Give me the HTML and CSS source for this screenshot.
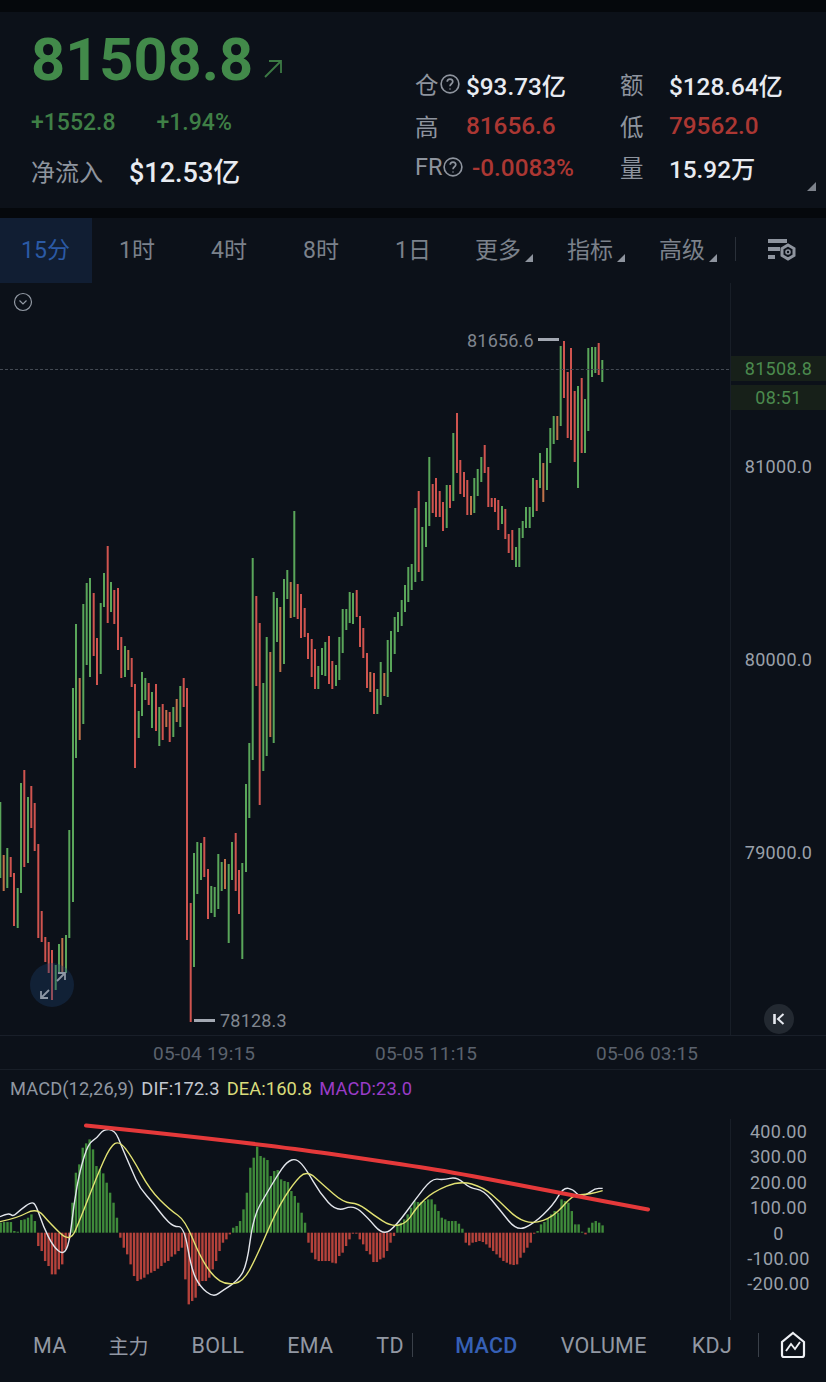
FILE: index.html
```html
<!DOCTYPE html>
<html lang="en">

<head>
     <meta charset="UTF-8">
     <meta name="viewport" content="width=device-width, initial-scale=1.0">
     <title>BTC 15分</title>
     <link rel="stylesheet" href="styles.css">
</head>

<body>
     <header class="ticker">
          <div class="ticker-left">
               <div class="price">81508.8<svg class="price-arrow" viewBox="0 0 18 18">
                         <path d="M1 17L17 1M5 1H17V13" />
                    </svg></div>
               <div class="change"><span>+1552.8</span><span>+1.94%</span></div>
               <div class="inflow"><span class="label">净流入</span><span class="value">$12.53亿</span></div>
          </div>
          <div class="stats">
               <span class="label">仓<svg class="help" viewBox="0 0 18 18">
                         <circle cx="9" cy="9" r="8" />
                         <path d="M6.5 7C6.5 3.8 11.5 3.8 11.5 7C11.5 8.8 9 8.8 9 11M9 13V14" />
                    </svg></span>
               <span class="value">$93.73亿</span>
               <span class="label">额</span>
               <span class="value">$128.64亿</span>
               <span class="label">高</span>
               <span class="value red">81656.6</span>
               <span class="label">低</span>
               <span class="value red">79562.0</span>
               <span class="label label-fr">FR<svg class="help" viewBox="0 0 18 18">
                         <circle cx="9" cy="9" r="8" />
                         <path d="M6.5 7C6.5 3.8 11.5 3.8 11.5 7C11.5 8.8 9 8.8 9 11M9 13V14" />
                    </svg></span>
               <span class="value red value-fr">-0.0083%</span>
               <span class="label">量</span>
               <span class="value">15.92万</span>
          </div>
          <i class="corner"></i>
     </header>

     <nav class="periods">
          <a class="period active">15分</a>
          <a class="period">1时</a>
          <a class="period">4时</a>
          <a class="period">8时</a>
          <a class="period">1日</a>
          <a class="period more">更多</a>
          <a class="period more">指标</a>
          <a class="period more">高级</a>
          <span class="periods-divider"></span>
          <svg class="settings" viewBox="0 0 30 24">
               <path class="settings-bars" d="M1 3H20M1 11H13M1 19H8" />
               <path class="settings-nut" d="M21 7L27 10.5V17.5L21 21L15 17.5V10.5Z" />
               <circle class="settings-hole" cx="21" cy="14" r="2" />
          </svg>
     </nav>

     <section class="chart">
          <svg class="collapse" viewBox="0 0 20 20">
               <circle cx="10" cy="10" r="8.5" />
               <path d="M6.5 8.5L10 12L13.5 8.5" />
          </svg>
          <svg id="candles" class="chart-canvas" viewBox="0 283 826 752"></svg>
          <div class="last-line"></div>
          <div class="price-axis">
               <div class="axis-tag tag-price">81508.8</div>
               <div class="axis-tag tag-time">08:51</div>
               <div class="axis-label label-81000">81000.0</div>
               <div class="axis-label label-80000">80000.0</div>
               <div class="axis-label label-79000">79000.0</div>
          </div>
          <div class="extreme extreme-high">81656.6<i></i></div>
          <div class="extreme extreme-low"><i></i>78128.3</div>
          <div class="zoom-btn">
               <svg viewBox="0 0 44 44">
                    <path d="M19 27L11 35M11 28V35H18M27 18L35 10M28 10H35V17" />
               </svg>
          </div>
          <div class="back-btn">
               <svg viewBox="0 0 14 14">
                    <path class="back-bar" d="M2.5 2V12" />
                    <path class="back-arrow" d="M11.5 2L6 7L11.5 12" />
               </svg>
          </div>
     </section>

     <div class="time-axis">
          <span>05-04 19:15</span>
          <span>05-05 11:15</span>
          <span>05-06 03:15</span>
     </div>

     <section class="macd">
          <div class="macd-legend">
               <span class="grey">MACD(12,26,9)</span>
               <span class="dif">DIF:172.3</span>
               <span class="dea">DEA:160.8</span>
               <span class="hist">MACD:23.0</span>
          </div>
          <svg id="macd-chart" class="chart-canvas" viewBox="0 1070 826 250"></svg>
          <div class="macd-axis">
               <span>400.00</span>
               <span>300.00</span>
               <span>200.00</span>
               <span>100.00</span>
               <span>0</span>
               <span>-100.00</span>
               <span>-200.00</span>
          </div>
     </section>

     <nav class="indicators">
          <a>MA</a>
          <a class="zh">主力</a>
          <a>BOLL</a>
          <a>EMA</a>
          <a class="tight">TD</a>
          <span class="indicators-divider"></span>
          <a class="active">MACD</a>
          <a>VOLUME</a>
          <a class="tight-wide">KDJ</a>
          <span class="indicators-divider"></span>
          <svg class="house" viewBox="0 0 26 28">
               <path class="house-shell" d="M13 2L24 11V24C24 25.5 23.2 26 22 26H4C2.8 26 2 25.5 2 24V11Z" />
               <path class="house-line" d="M6 20L11 13L15 18L20 11" />
          </svg>
     </nav>

     <script src="chart.js"></script>
</body>

</html>
```

FILE: styles.css
```css
* {
     box-sizing: border-box;
}

body {
     font-family: Roboto, "Noto Sans CJK SC", sans-serif;
     margin: 0;
     padding-top: 12px;
     width: 826px;
     height: 1382px;
     overflow: hidden;
     background-color: #05080c;
     color: #e6e9ef;
}

/* ticker header */
.ticker {
     position: relative;
     height: 196px;
     display: flex;
     background-color: #0c1119;
}

.ticker-left {
     width: 415px;
     padding: 18px 0 0 31px;
}

.price {
     display: flex;
     font-size: 59.5px;
     font-weight: 700;
     line-height: 60px;
     color: #428a4a;
}

.price-arrow {
     width: 18px;
     height: 18px;
     margin: 30px 0 0 11px;
     fill: none;
     stroke: #3c7a44;
     stroke-width: 1.8;
}

.change {
     display: flex;
     gap: 41px;
     margin-top: 19px;
     font-size: 23px;
     font-weight: 500;
     line-height: 28px;
     color: #3f7f46;
}

.inflow {
     display: flex;
     align-items: center;
     gap: 26px;
     margin-top: 18px;
     line-height: 36px;
}

.inflow .label {
     font-size: 24px;
     color: #8e949e;
}

.inflow .value {
     font-size: 27px;
     font-weight: 500;
     color: #e8ebf1;
}

.stats {
     display: grid;
     grid-template-columns: 51px 154px 49px 1fr;
     grid-auto-rows: 41.5px;
     align-items: center;
     padding-top: 51.5px;
     flex: 1;
}

.stats .label {
     display: flex;
     align-items: center;
     font-size: 23.5px;
     color: #8e949e;
}

.stats .value {
     font-size: 24.3px;
     font-weight: 500;
     color: #e8ebf1;
}

.stats .red {
     color: #ab3733;
}

.stats .value-fr {
     margin-left: 6px;
}

.help {
     width: 20px;
     height: 20px;
     margin-left: 1px;
     fill: none;
     stroke: #8e949e;
     stroke-width: 1.5;
}

.corner {
     position: absolute;
     right: 10px;
     bottom: 17px;
     border-left: 9px solid transparent;
     border-bottom: 9px solid #7d828b;
}

/* period tabs */
.periods {
     display: flex;
     align-items: center;
     height: 65px;
     margin-top: 10px;
     background-color: #0c1119;
}

.period {
     position: relative;
     width: 92px;
     height: 65px;
     line-height: 65px;
     text-align: center;
     font-size: 23px;
     color: #7b818b;
     margin-left: -1px;
     margin-right: 1px;
}

.period.active {
     margin-left: 0;
     margin-right: 0;
     padding-right: 1px;
     background-color: #111e33;
     color: #2b5aa6;
}

.period.more {
     padding-right: 14px;
}

.period.more::after {
     content: "";
     position: absolute;
     top: 36px;
     right: 18px;
     border-left: 8px solid transparent;
     border-bottom: 8px solid #8e949e;
}

.periods-divider {
     width: 1px;
     height: 24px;
     margin: -4px 0 0 -1px;
     background-color: #2a3039;
}

.settings {
     width: 30px;
     height: 24px;
     margin: -1px 0 0 31px;
     fill: none;
     stroke: #8e949e;
}

.settings-bars {
     stroke-width: 4;
}

.settings-nut {
     stroke-width: 3;
     fill: #0c1119;
}

.settings-hole {
     stroke-width: 1.6;
}

/* main chart */
.chart {
     position: relative;
     height: 753px;
     background-color: #0c1119;
     border-bottom: 1px solid #191f29;
}

.chart-canvas {
     position: absolute;
     top: 0;
     left: 0;
     width: 826px;
     height: 100%;
}

#candles {
     filter: blur(0.35px);
}

.collapse {
     position: absolute;
     top: 9px;
     left: 13px;
     width: 20px;
     height: 20px;
     fill: none;
     stroke: #9299a3;
     stroke-width: 1.2;
}

.last-line {
     position: absolute;
     top: 86px;
     left: 0;
     width: 729px;
     border-top: 1px dashed #444a53;
}

.price-axis {
     position: absolute;
     top: 0;
     right: 0;
     width: 96px;
     height: 100%;
     border-left: 1px solid #181e27;
}

.axis-tag {
     position: absolute;
     left: 0;
     right: 0;
     height: 25px;
     line-height: 25px;
     text-align: center;
     font-size: 18px;
     letter-spacing: 0.3px;
     color: #4b8a4e;
     background-color: #172019;
}

.tag-price {
     top: 73px;
}

.tag-time {
     top: 102px;
}

.axis-label {
     position: absolute;
     left: 0;
     right: 0;
     text-align: center;
     font-size: 18px;
     letter-spacing: 0.3px;
     line-height: 22px;
     color: #9aa0aa;
}

.label-81000 {
     top: 173px;
}

.label-80000 {
     top: 366px;
}

.label-79000 {
     top: 559px;
}

.extreme {
     position: absolute;
     display: flex;
     align-items: center;
     font-size: 18px;
     letter-spacing: 0.2px;
     line-height: 22px;
     color: #80868f;
}

.extreme i {
     width: 21px;
     height: 3px;
     background-color: #a3a8b2;
}

.extreme-high {
     top: 47px;
     left: 467px;
     gap: 4px;
}

.extreme-high i {
     margin-top: -3px;
}

.extreme-low {
     top: 727px;
     left: 194px;
     gap: 5px;
}

.extreme-low i {
     margin-top: -1px;
}

.zoom-btn {
     position: absolute;
     top: 680px;
     left: 30px;
     width: 44px;
     height: 44px;
     border-radius: 50%;
     background-color: rgba(30, 62, 110, 0.35);
}

.zoom-btn svg {
     display: block;
     fill: none;
     stroke: #8d97a5;
     stroke-width: 1.8;
}

.back-btn {
     position: absolute;
     top: 721px;
     left: 764px;
     width: 30px;
     height: 30px;
     padding: 8px;
     border-radius: 50%;
     background-color: #232931;
}

.back-btn svg {
     display: block;
     fill: none;
     stroke: #e6e9ef;
}

.back-bar {
     stroke-width: 2.6;
}

.back-arrow {
     stroke-width: 2;
}

/* time axis */
.time-axis {
     position: relative;
     height: 34px;
     line-height: 35px;
     font-size: 19px;
     letter-spacing: 0.2px;
     color: #5b626d;
     background-color: #0c1119;
     border-bottom: 1px solid #181e27;
}

.time-axis span {
     position: absolute;
}

.time-axis span:nth-child(1) {
     left: 153px;
}

.time-axis span:nth-child(2) {
     left: 375px;
}

.time-axis span:nth-child(3) {
     left: 596px;
}

/* macd panel */
.macd {
     position: relative;
     height: 250px;
     background-color: #0c1119;
}

.macd-legend {
     position: absolute;
     top: 8px;
     left: 10px;
     display: flex;
     gap: 7px;
     font-size: 18.3px;
     letter-spacing: 0.1px;
     line-height: 22px;
}

.macd-legend .grey {
     color: #9097a1;
}

.macd-legend .dif {
     color: #c3c8d0;
}

.macd-legend .dea {
     color: #d9dc7c;
}

.macd-legend .hist {
     color: #9a3cc7;
}

.macd-axis {
     position: absolute;
     top: 49px;
     right: 0;
     width: 96px;
     height: 201px;
     border-left: 1px solid #181e27;
     display: flex;
     flex-direction: column;
     align-items: center;
     font-size: 18px;
     letter-spacing: 0.3px;
     line-height: 25.4px;
     color: #9aa0aa;
}

/* bottom indicator tabs */
.indicators {
     display: flex;
     align-items: center;
     gap: 43px;
     height: 62px;
     padding: 0 0 12px 33px;
     font-size: 21.5px;
     letter-spacing: 0.3px;
     color: #9298a3;
     background-color: #0c1119;
}

.indicators .zh {
     margin-left: -1px;
     font-size: 20px;
     letter-spacing: 0;
}

.indicators .active {
     margin-left: -1px;
     font-weight: 500;
     color: #3660b5;
}

.indicators .tight {
     margin-right: -34px;
     width: 27px;
     overflow: hidden;
}

.indicators .tight-wide {
     margin-left: 2px;
     margin-right: -17px;
}

.indicators-divider {
     width: 1px;
     height: 24px;
     background-color: #3a4049;
}

.house {
     width: 26px;
     height: 28px;
     margin-left: -22px;
     fill: none;
     stroke: #eef0f4;
}

.house-shell {
     stroke-width: 2.2;
}

.house-line {
     stroke-width: 1.9;
}
```

FILE: chart.js
```js
// x, top, bottom, colour, all in page pixels: g green, r red, o orange
const candles = [
     [0.3, 802, 878, 'g'], [3.7, 855, 891, 'o'], [7.3, 848, 888, 'g'], [10.7, 857, 877, 'r'],
     [14, 873, 926, 'r'], [17.7, 888, 928, 'g'], [21, 783, 893, 'g'], [24.3, 770, 867, 'r'],
     [28, 797, 863, 'g'], [31.3, 786, 828, 'r'], [34.7, 803, 851, 'r'], [38.3, 844, 938, 'r'],
     [41.7, 911, 942, 'r'], [45.3, 937, 962, 'r'], [48.7, 942, 973, 'r'], [52, 950, 1000, 'r'],
     [55.7, 965, 990, 'g'], [59, 944, 973, 'g'], [62.3, 938, 973, 'o'], [66, 935, 973, 'g'],
     [69.3, 830, 938, 'g'], [73, 688, 902, 'g'], [76, 624, 758, 'g'], [79.7, 678, 740, 'o'],
     [83.3, 604, 724, 'g'], [86.7, 583, 665, 'g'], [90, 578, 677, 'g'], [93.7, 593, 656, 'r'],
     [97, 638, 685, 'r'], [100.7, 603, 674, 'g'], [104, 573, 607, 'g'], [107.7, 546, 623, 'r'],
     [111, 582, 612, 'g'], [114.3, 590, 624, 'r'], [118, 588, 650, 'r'], [121.3, 637, 678, 'r'],
     [125, 646, 677, 'g'], [128.3, 650, 670, 'o'], [131.7, 658, 687, 'r'], [135, 684, 768, 'r'],
     [138.7, 711, 738, 'g'], [142, 672, 716, 'g'], [145.3, 678, 700, 'g'], [148.7, 683, 705, 'r'],
     [152, 692, 728, 'g'], [156, 684, 731, 'r'], [159.3, 707, 746, 'g'], [162.7, 704, 740, 'r'],
     [166.3, 710, 727, 'o'], [169.7, 712, 742, 'r'], [173.3, 707, 737, 'g'], [176.7, 699, 722, 'o'],
     [180.3, 686, 727, 'g'], [183.7, 678, 707, 'r'], [187, 688, 940, 'r'], [190.7, 903, 1022, 'r'],
     [194, 853, 967, 'g'], [197.3, 842, 894, 'g'], [201, 843, 880, 'g'], [204.3, 837, 877, 'r'],
     [208, 869, 919, 'r'], [211.3, 886, 913, 'g'], [214.7, 887, 917, 'g'], [218.3, 854, 909, 'g'],
     [221.7, 862, 891, 'g'], [225, 859, 889, 'o'], [228.7, 864, 943, 'g'], [232, 842, 880, 'g'],
     [235.7, 833, 891, 'r'], [239, 870, 914, 'r'], [242.3, 863, 959, 'g'], [246, 784, 872, 'g'],
     [249.3, 743, 818, 'g'], [252.7, 558, 760, 'g'], [256.3, 596, 686, 'r'], [259.7, 623, 805, 'r'],
     [263.3, 683, 771, 'g'], [266.7, 637, 756, 'g'], [270.3, 652, 737, 'o'], [273.7, 592, 743, 'g'],
     [277, 598, 642, 'g'], [280.3, 607, 672, 'o'], [284, 579, 664, 'g'], [287.3, 570, 599, 'g'],
     [290.7, 582, 618, 'o'], [294.3, 511, 617, 'g'], [297.7, 584, 619, 'r'], [301, 594, 638, 'r'],
     [304.7, 608, 637, 'r'], [308, 633, 659, 'r'], [311.7, 639, 677, 'r'], [315, 649, 689, 'r'],
     [318.3, 666, 689, 'g'], [322, 648, 675, 'g'], [325.3, 642, 676, 'g'], [329, 636, 684, 'r'],
     [332.3, 661, 689, 'r'], [336, 665, 686, 'g'], [339.3, 637, 680, 'g'], [342.7, 609, 653, 'g'],
     [346.3, 609, 630, 'g'], [349.7, 592, 623, 'g'], [353, 593, 624, 'g'], [356.7, 590, 617, 'r'],
     [360, 616, 647, 'r'], [363.3, 628, 658, 'r'], [367, 653, 688, 'r'], [370.3, 672, 692, 'o'],
     [374, 673, 714, 'r'], [377.3, 689, 714, 'g'], [380.7, 662, 705, 'g'], [384.3, 673, 696, 'o'],
     [387.7, 640, 697, 'g'], [391, 631, 672, 'g'], [394.7, 617, 654, 'g'], [398, 612, 632, 'g'],
     [401.7, 600, 626, 'g'], [405, 585, 612, 'g'], [408.3, 567, 602, 'g'], [411.7, 564, 590, 'g'],
     [415.3, 508, 582, 'g'], [418.7, 491, 572, 'r'], [422.3, 527, 581, 'g'], [426, 502, 547, 'g'],
     [429.3, 457, 526, 'g'], [432.7, 484, 513, 'r'], [436, 478, 517, 'r'], [439.7, 491, 517, 'r'],
     [443, 502, 531, 'r'], [446.7, 485, 528, 'g'], [450, 485, 508, 'r'], [453.3, 433, 501, 'g'],
     [457, 413, 473, 'r'], [460.3, 460, 494, 'r'], [464, 472, 497, 'r'], [467.3, 480, 515, 'r'],
     [471, 496, 515, 'o'], [474.3, 478, 513, 'g'], [477.7, 469, 496, 'g'], [481.3, 457, 482, 'g'],
     [484.7, 445, 473, 'r'], [488.3, 467, 507, 'r'], [491.7, 498, 507, 'r'], [495, 498, 512, 'r'],
     [498.3, 500, 530, 'r'], [502, 506, 524, 'g'], [505.3, 509, 539, 'r'], [508.7, 534, 553, 'r'],
     [512.3, 530, 560, 'r'], [516, 547, 567, 'g'], [519.3, 528, 567, 'g'], [522.7, 521, 538, 'g'],
     [526, 507, 528, 'g'], [529.7, 507, 528, 'g'], [533, 478, 517, 'g'], [536.7, 480, 511, 'r'],
     [540, 453, 488, 'g'], [543.3, 463, 502, 'o'], [547, 448, 490, 'g'], [550.3, 428, 463, 'g'],
     [553.7, 416, 444, 'g'], [557.3, 416, 440, 'o'], [560.7, 346, 426, 'g'], [564, 341, 398, 'r'],
     [567.7, 372, 438, 'r'], [571, 348, 440, 'r'], [574.7, 391, 462, 'r'], [578, 386, 488, 'g'],
     [581.7, 378, 453, 'r'], [585, 399, 453, 'g'], [588.3, 348, 431, 'g'], [592, 347, 377, 'g'],
     [595.3, 347, 373, 'g'], [598.7, 343, 375, 'r'], [602.3, 360, 382, 'g']
];

const candleColours = { g: '#5aa65a', r: '#d0544f', o: '#c0724a' };

// macd histogram, bar height times three, left to right
const histogram = [
     30, 32, 32, 32, 5, 3, 38, 40, 45, 55, 35, -40, -55, -85, -100, -125, -125, -110, -95, -50, -20,
     90, 180, 205, 255, 268, 280, 250, 200, 190, 178, 150, 120, 90, 45, -15, -45, -65, -95, -130,
     -145, -140, -135, -125, -120, -115, -108, -100, -90, -85, -72, -65, -55, -45, -140, -215, -205,
     -195, -160, -145, -145, -135, -110, -85, -55, -30, -20, -5, 15, 20, 35, 70, 120, 195, 225, 258,
     230, 225, 218, 170, 185, 188, 160, 155, 152, 125, 110, 90, 60, 30, -30, -60, -80, -85, -85, -85,
     -85, -90, -92, -70, -60, -40, -20, -3, -3, -20, -35, -55, -65, -88, -88, -80, -75, -55, -30, -10,
     25, 30, 40, 55, 75, 95, 92, 92, 95, 100, 100, 85, 65, 45, 40, 35, 35, 35, 27, 12, -30, -38, -30,
     -28, -25, -28, -35, -45, -55, -65, -75, -85, -90, -95, -97, -95, -75, -60, -45, -30, -3, 5, 25,
     32, 42, 55, 65, 60, 100, 95, 90, 65, 25, 25, 3, -5, 15, 30, 35, 30, 22
];

// line points read at three times scale, relative to the panel top at 1070
const difLine = [
     [0, 440], [25, 428], [40, 440], [60, 420], [95, 395], [108, 405], [130, 470], [160, 530], [190, 555],
     [208, 520], [222, 400], [240, 300], [265, 220], [290, 205], [310, 178], [345, 180], [365, 230],
     [395, 300], [420, 355], [460, 400], [490, 440], [520, 470], [552, 470], [575, 600], [600, 650],
     [640, 682], [670, 660], [710, 635], [740, 590], [760, 440], [800, 370], [830, 320], [860, 275],
     [890, 265], [920, 300], [960, 370], [1010, 425], [1060, 405], [1100, 440], [1150, 497], [1190, 465],
     [1245, 390], [1295, 325], [1330, 330], [1370, 320], [1410, 355], [1450, 360], [1500, 420],
     [1550, 483], [1600, 462], [1660, 405], [1690, 352], [1720, 358], [1735, 378], [1760, 375],
     [1785, 355], [1808, 355]
];

const deaLine = [
     [0, 455], [50, 445], [110, 413], [150, 460], [210, 518], [240, 450], [290, 320], [330, 230], [358, 212],
     [395, 260], [450, 360], [510, 420], [555, 450], [600, 560], [640, 620], [680, 645], [730, 635],
     [770, 560], [830, 420], [880, 340], [920, 300], [970, 345], [1030, 398], [1075, 400], [1120, 435],
     [1175, 470], [1220, 460], [1250, 410], [1300, 365], [1380, 332], [1450, 352], [1500, 395],
     [1550, 445], [1600, 462], [1660, 440], [1710, 385], [1730, 375], [1770, 372], [1808, 362]
];

const trendLine = [[86, 1125.5], [256, 1143], [400, 1164], [457, 1173], [560, 1193], [648, 1209.5]];

const NS = 'http://www.w3.org/2000/svg';

function addShape(svg, tag, attrs) {
     const el = document.createElementNS(NS, tag);
     Object.keys(attrs).forEach(key => el.setAttribute(key, attrs[key]));
     svg.appendChild(el);
}

// midpoints as curve ends so the lines come out smooth
function smoothPath(points) {
     let d = `M${points[0][0]} ${points[0][1]}`;
     for (let i = 1; i < points.length - 1; i++) {
          const midX = (points[i][0] + points[i + 1][0]) / 2;
          const midY = (points[i][1] + points[i + 1][1]) / 2;
          d += `Q${points[i][0]} ${points[i][1]} ${midX} ${midY}`;
     }
     const last = points[points.length - 1];
     return d + `L${last[0]} ${last[1]}`;
}

const toPage = p => [p[0] / 3, 1070 + p[1] / 3];

const candleSvg = document.getElementById('candles');
candles.forEach(([x, top, bottom, colour]) => {
     addShape(candleSvg, 'rect', {
          x: x - 1,
          y: top,
          width: 2,
          height: bottom - top,
          fill: candleColours[colour]
     });
});

const macdSvg = document.getElementById('macd-chart');
const zeroY = 1232.7;
histogram.forEach((value, i) => {
     const height = Math.abs(value) / 3;
     addShape(macdSvg, 'rect', {
          x: 0.67 + 3.42 * i - 1.2,
          y: value > 0 ? zeroY - height : zeroY,
          width: 2.4,
          height: height,
          fill: value > 0 ? '#3f8a3a' : '#b5423b'
     });
});

addShape(macdSvg, 'path', { d: smoothPath(difLine.map(toPage)), fill: 'none', stroke: '#e3e6ec', 'stroke-width': 1.4 });
addShape(macdSvg, 'path', { d: smoothPath(deaLine.map(toPage)), fill: 'none', stroke: '#e2e273', 'stroke-width': 1.4 });
addShape(macdSvg, 'path', { d: smoothPath(trendLine), fill: 'none', stroke: '#e5393a', 'stroke-width': 4, 'stroke-linecap': 'round' });
```
